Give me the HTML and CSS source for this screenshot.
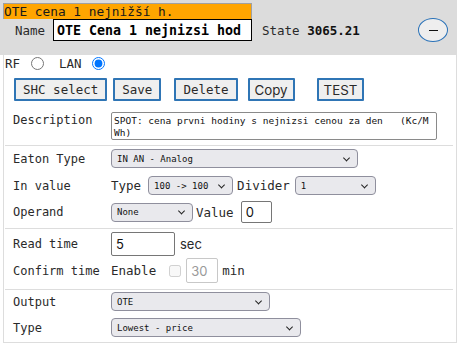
FILE: index.html
```html
<!DOCTYPE html>
<html>
<head>
<meta charset="utf-8">
<link rel="stylesheet" href="styles.css">
</head>
<body>
<div class="panel">
  <header class="head">
    <div class="title">OTE cena 1 nejnižší h.</div>
    <div class="name-row">
      <span class="name-label">Name</span>
      <input class="name-input" type="text" value="OTE Cena 1 nejnizsi hod">
      <span class="state">State <b>3065.21</b></span>
      <button class="collapse" type="button"><span class="minus"></span></button>
    </div>
  </header>
  <div class="body">
    <div class="radio-row">
      <span>RF</span>
      <input class="radio" type="radio" name="link">
      <span class="lan">LAN</span>
      <input class="radio radio-lan" type="radio" name="link" checked>
    </div>
    <div class="btn-row">
      <button class="btn" type="button">SHC select</button>
      <button class="btn" type="button">Save</button>
      <button class="btn btn-delete" type="button">Delete</button>
      <button class="btn btn-sans btn-copy" type="button">Copy</button>
      <button class="btn btn-sans btn-test" type="button">TEST</button>
    </div>
    <div class="desc-row">
      <span class="row-label">Description</span>
      <textarea class="desc">SPOT: cena prvni hodiny s nejnizsi cenou za den   (Kc/MWh)</textarea>
    </div>
    <div class="sep sep-first"></div>
    <div class="row row-eaton">
      <span class="row-label">Eaton Type</span>
      <span class="sel"><select class="select w-eaton"><option>IN AN - Analog</option></select></span>
    </div>
    <div class="row row-invalue">
      <span class="row-label">In value</span>
      <span>Type</span>
      <span class="sel gap-l"><select class="select w-type"><option>100 -&gt; 100</option></select></span>
      <span class="gap-s">Divider</span>
      <span class="sel gap-m"><select class="select w-div"><option>1</option></select></span>
    </div>
    <div class="row row-operand">
      <span class="row-label">Operand</span>
      <span class="sel"><select class="select w-op"><option>None</option></select></span>
      <span class="gap-xs">Value</span>
      <input class="field w-val gap-l" type="text" value="0">
    </div>
    <div class="sep sep-mid"></div>
    <div class="row row-read">
      <span class="row-label">Read time</span>
      <input class="field w-read" type="text" value="5">
      <span class="unit-sans">sec</span>
    </div>
    <div class="row row-confirm">
      <span class="row-label">Confirm time</span>
      <span>Enable</span>
      <input class="check" type="checkbox" disabled>
      <input class="field field-off w-conf" type="text" value="30" disabled>
      <span class="gap-s">min</span>
    </div>
    <div class="sep sep-last"></div>
    <div class="row row-output">
      <span class="row-label">Output</span>
      <span class="sel"><select class="select w-out"><option>OTE</option></select></span>
    </div>
    <div class="row row-type">
      <span class="row-label">Type</span>
      <span class="sel"><select class="select w-kind"><option>Lowest - price</option></select></span>
    </div>
  </div>
</div>
</body>
</html>
```

FILE: styles.css
```css
* { box-sizing: border-box; }

body {
  margin: 0;
  font-family: "DejaVu Sans Mono", monospace;
  font-size: 12.5px;
  color: #2a2a2a;
  background: #fff;
}

.panel { width: 457px; }

.head {
  background: #dcdcdc;
  height: 55px;
  padding: 3px 0 0 3px;
}

.title {
  width: 249px;
  height: 16px;
  background: #ffa500;
  border: 1px solid #a0a0a0;
  border-bottom: none;
  font-size: 12.8px;
  line-height: 15px;
  color: #1a1a1a;
}

.name-row {
  display: flex;
  align-items: center;
  height: 22px;
}

.name-label {
  margin-left: 12px;
  width: 38px;
}

.name-input {
  width: 199px;
  height: 22px;
  margin: 0;
  border: 1px solid #000;
  background: #fff;
  font: bold 13.3px "DejaVu Sans Mono", monospace;
  color: #000;
  padding: 0 3px;
}

.state { margin-left: 10px; }
.state b { font-weight: bold; color: #111; }

.collapse {
  margin-left: auto;
  margin-right: 9px;
  width: 30px;
  height: 24px;
  border-radius: 50%;
  border: 1.5px solid #2a72b8;
  background: #eee;
  display: flex;
  align-items: center;
  justify-content: center;
  padding: 0;
}

.minus {
  width: 9px;
  height: 1px;
  background: #111;
}

.body {
  margin-left: 3px;
  width: 454px;
  border: 1px solid #ddd;
  border-top: none;
  padding-bottom: 5px;
}

.radio-row {
  height: 17px;
  display: flex;
  align-items: center;
  padding-left: 1px;
}

.radio {
  margin: 0 0 0 11px;
  width: 13px;
  height: 13px;
}

.lan { margin-left: 15px; }
.radio-lan { margin-left: 10px; }

.btn-row {
  display: flex;
  margin-top: 6px;
  padding-left: 10px;
  gap: 6px;
}

.btn {
  height: 23px;
  margin: 0;
  padding: 0 7px;
  border: 2px solid #2f75b5;
  border-radius: 1px;
  background: #efefef;
  font: 12.5px "DejaVu Sans Mono", monospace;
  color: #2a2a2a;
}

.btn-sans {
  font-family: Inter, "Noto Sans", sans-serif;
  font-size: 13.3px;
  padding: 0 5px;
}

.btn-delete { margin-left: 7px; }
.btn-copy { margin-left: 4px; }
.btn-test { margin-left: 16px; }

.desc-row {
  display: flex;
  margin-top: 11px;
  padding-left: 9px;
}

.row-label {
  width: 98px;
  flex: none;
  line-height: 16px;
  font-size: 12px;
}

.desc {
  width: 326px;
  height: 28px;
  margin: 0;
  padding: 2px 2px;
  border: 1px solid #8a8a8a;
  border-radius: 2px;
  font: 9.5px/12px "DejaVu Sans Mono", monospace;
  color: #111;
  resize: none;
  overflow: hidden;
  word-break: break-all;
}

.sep {
  border-top: 1px solid #ddd;
  margin: 0 3px 0 1px;
}
.sep-first { margin-top: 5px; }
.sep-mid { margin-top: 5px; }
.sep-last { margin-top: 6px; }

.row {
  display: flex;
  align-items: center;
  padding-left: 9px;
}

.row-eaton { height: 19px; margin-top: 3px; }
.row-invalue { height: 19px; margin-top: 8px; }
.row-operand { height: 22px; margin-top: 6px; }
.row-read { height: 24px; margin-top: 3px; }
.row-confirm { height: 25px; margin-top: 2px; }
.row-output { height: 19px; margin-top: 2px; }
.row-type { height: 19px; margin-top: 7px; }

.sel {
  position: relative;
  display: inline-flex;
}

.sel::after {
  content: "";
  position: absolute;
  right: 9px;
  top: 50%;
  width: 4px;
  height: 4px;
  border-right: 1px solid #222;
  border-bottom: 1px solid #222;
  transform: translateY(-70%) rotate(45deg);
  pointer-events: none;
}

.select {
  appearance: none;
  -webkit-appearance: none;
  height: 19px;
  margin: 0;
  border: 1px solid #8f8f9d;
  border-radius: 4px;
  background: #e9e9ed;
  font: 9px "DejaVu Sans Mono", monospace;
  color: #111;
  padding: 0 18px 0 5px;
}

.w-eaton { width: 247px; }
.w-type { width: 85px; }
.w-div { width: 81px; }
.w-op { width: 82px; }
.w-out { width: 159px; }
.w-kind { width: 190px; }

.field {
  margin: 0;
  border: 1px solid #767676;
  border-radius: 2px;
  background: #fff;
  font: 13px Inter, "Noto Sans", sans-serif;
  color: #111;
  padding: 0 4px;
}

.w-val { width: 31px; height: 22px; }
.w-read { width: 64px; height: 24px; }
.w-conf { width: 32px; height: 25px; margin-left: 5px; }

.field-off {
  border-color: #c8c8c8;
  color: #9a9a9a;
  background: #fff;
}

.check {
  margin: 0 0 0 13px;
  width: 12px;
  height: 12px;
}

.unit-sans {
  margin-left: 5px;
  font: 13px Inter, "Noto Sans", sans-serif;
}

.gap-xs { margin-left: 3px; }
.gap-s { margin-left: 4px; }
.gap-m { margin-left: 5px; }
.gap-l { margin-left: 7px; }
```
